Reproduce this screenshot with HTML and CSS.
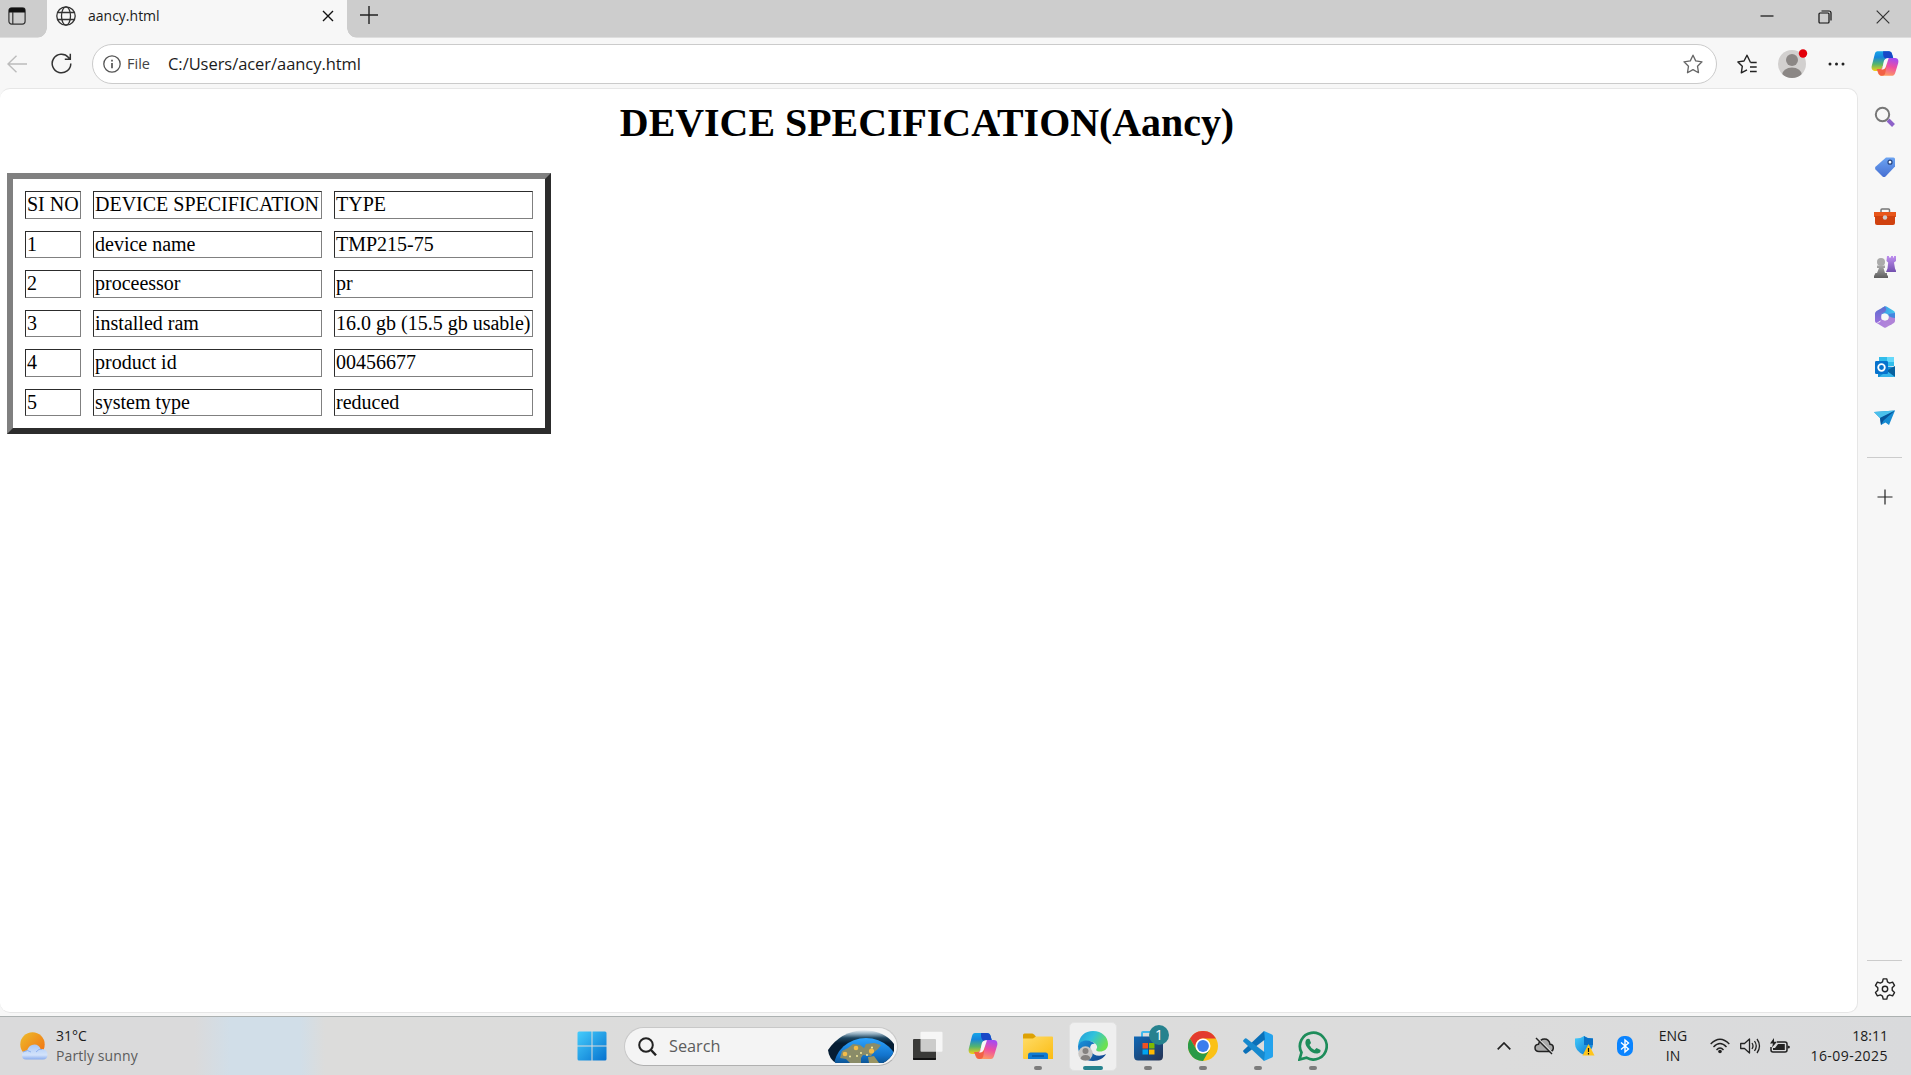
FILE: index.html
```html
<!DOCTYPE html>
<html lang="en">
<head>
<meta charset="utf-8">
<title>aancy.html</title>
<link rel="stylesheet" href="styles.css">
</head>
<body>
<svg class="defs" width="0" height="0" aria-hidden="true">
  <defs>
    <linearGradient id="cpA" x1="0" y1="0" x2="0" y2="1"><stop offset="0" stop-color="#16a5e8"/><stop offset=".3" stop-color="#1686dc"/><stop offset=".65" stop-color="#55b56c"/><stop offset="1" stop-color="#f5cf13"/></linearGradient>
    <linearGradient id="cpB" x1=".6" y1="0" x2=".3" y2="1"><stop offset="0" stop-color="#a64bf0"/><stop offset=".45" stop-color="#ee4fa0"/><stop offset="1" stop-color="#ffa25c"/></linearGradient>
    <linearGradient id="blue" x1="0" y1="0" x2="1" y2="1"><stop offset="0" stop-color="#45cdfc"/><stop offset="1" stop-color="#0672cf"/></linearGradient>
    <linearGradient id="tagG" x1="0" y1="0" x2="0" y2="1"><stop offset="0" stop-color="#6ca4f2"/><stop offset="1" stop-color="#466fd2"/></linearGradient>
    <linearGradient id="purple" x1="0" y1="0" x2="0" y2="1"><stop offset="0" stop-color="#bf8ff0"/><stop offset="1" stop-color="#7350ae"/></linearGradient>
    <linearGradient id="grey" x1="0" y1="0" x2="0" y2="1"><stop offset="0" stop-color="#aaa"/><stop offset="1" stop-color="#5e5e5e"/></linearGradient>
    <linearGradient id="hexTop" x1="0" y1="0" x2="1" y2="0"><stop offset="0" stop-color="#3a9be6"/><stop offset="1" stop-color="#45c8ee"/></linearGradient>
    <linearGradient id="hexLeft" x1="0" y1="0" x2="0" y2="1"><stop offset="0" stop-color="#5a6fd0"/><stop offset="1" stop-color="#9a6fdc"/></linearGradient>
    <linearGradient id="hexBottom" x1="0" y1="0" x2="1" y2="0"><stop offset="0" stop-color="#a97be0"/><stop offset="1" stop-color="#b58ad6"/></linearGradient>
    <linearGradient id="sun" x1="0" y1="0" x2="1" y2="1"><stop offset="0" stop-color="#edbd2c"/><stop offset="1" stop-color="#f26b10"/></linearGradient>
    <linearGradient id="cloud" x1="0" y1="0" x2="0" y2="1"><stop offset="0" stop-color="#a9c7f5"/><stop offset=".7" stop-color="#d3e3fb"/><stop offset="1" stop-color="#89acee"/></linearGradient>
    <linearGradient id="folder" x1="0" y1="0" x2="1" y2="1"><stop offset="0" stop-color="#ffdc67"/><stop offset="1" stop-color="#fbbc13"/></linearGradient>
    <linearGradient id="edgeT" x1="0" y1="0" x2="1" y2=".5"><stop offset="0" stop-color="#229bd8"/><stop offset=".5" stop-color="#31c2dc"/><stop offset="1" stop-color="#6be052"/></linearGradient>
    <linearGradient id="edgeB" x1="0" y1="0" x2="1" y2="1"><stop offset="0" stop-color="#1a93dd"/><stop offset="1" stop-color="#123f86"/></linearGradient>
    <linearGradient id="store" x1="0" y1="0" x2="1" y2="1"><stop offset="0" stop-color="#0e68b7"/><stop offset="1" stop-color="#263252"/></linearGradient>
    <linearGradient id="sky" x1="0" y1="0" x2="0" y2="1"><stop offset="0" stop-color="#f0f3f5"/><stop offset=".12" stop-color="#8fabbd"/><stop offset=".24" stop-color="#1d4560"/><stop offset=".4" stop-color="#061d33"/></linearGradient>
    <linearGradient id="globeRim" x1="0" y1="0" x2="0" y2="1"><stop offset="0" stop-color="#2da4ff"/><stop offset=".3" stop-color="#1273cc"/><stop offset=".6" stop-color="#07304f"/></linearGradient>
    <symbol id="copilot" viewBox="0 0 30 28">
      <path d="M7 1H19c2 0 3 1 3.600 3L24 9H18c-2 0-3 1-3.700 3l-2.500 7c-.6 2-2 3-4 3H4C1 22 0 19 1 16L4 4c.6-2 1.500-3 3-3z" fill="url(#cpA)"/>
      <path d="M13 1h6c2 0 3 1 3.600 3L24 9h-7c-2 0-4-2-4-5z" fill="#1747c7"/>
      <path d="M23 27H11c-2 0-3-1-3.600-3L6.500 20H9c2 0 3-1 3.700-3l2.500-6c.7-2 2-3 4-3H26c3 0 4 3 3 6l-3 10c-.6 2-1.500 3-3 3z" fill="url(#cpB)"/>
      <path d="M6 20h6c2 0 3-1 3.500-3l2-6-2 12c-.5 3-1.500 4-4 4-2 0-3-1-3.600-3z" fill="#f26145"/>
      <path d="M13.500 12.500c.8-3 2-4.300 5.500-4.300l-3.200 9.500c-.8 2-2 2.800-5 2.800 1-.6 1.300-1.300 1.700-2.500z" fill="#f7f7f7"/>
    </symbol>
  </defs>
</svg>

<header class="tabstrip">
  <svg class="tab-actions" viewBox="0 0 18 18"><rect x=".9" y=".9" width="16.200" height="16.200" rx="2.800" fill="none" stroke="#333" stroke-width="1.200"/><path d="M1 5.500V3Q1 1 3 1H15Q17 1 17 3V5.500Z" fill="#111"/><path d="M4.800 5V17" stroke="#333" stroke-width="1.200"/></svg>
  <div class="tab">
    <svg class="globe" viewBox="0 0 20 20" fill="none" stroke="#333" stroke-width="1.300"><circle cx="10" cy="10" r="9.200"/><ellipse cx="10" cy="10" rx="4.500" ry="9.200"/><path d="M1.600 6.500H18.400M1.600 13.500H18.400"/></svg>
    <span class="tab-title">aancy.html</span>
    <svg class="tab-close" viewBox="0 0 12 12" stroke="#111" stroke-width="1.400"><path d="M1 1L11 11M11 1L1 11"/></svg>
  </div>
  <svg class="new-tab" viewBox="0 0 18 18" stroke="#222" stroke-width="1.400"><path d="M9 0V18M0 9H18"/></svg>
  <div class="window-controls">
    <svg viewBox="0 0 14 14"><path d="M.5 6H13.500" stroke="#111" stroke-width="1.200"/></svg>
    <svg viewBox="0 0 14 14" fill="none" stroke="#111" stroke-width="1.200"><rect x="1" y="3" width="10" height="10" rx="1"/><path d="M3.500 1H11Q13 1 13 3V10.500"/></svg>
    <svg viewBox="0 0 14 14" stroke="#333" stroke-width="1.200"><path d="M.7 .7L13.300 13.300M13.300 .7L.7 13.300"/></svg>
  </div>
</header>

<div class="toolbar">
  <svg class="back" viewBox="0 0 20 18" fill="none" stroke="#bcbcbc" stroke-width="1.400"><path d="M9.500 .8L1 9L9.500 17.200M1 9H20"/></svg>
  <svg class="reload" viewBox="0 0 21 21" fill="none" stroke="#333" stroke-width="1.500"><path d="M19.800 10.500A9.300 9.300 0 1 1 17.500 4.400L19 6.100M19.300 .8V6.200H13.800"/></svg>
  <div class="address">
    <svg class="info" viewBox="0 0 18 18" fill="none" stroke="#555" stroke-width="1.300"><circle cx="9" cy="9" r="8.200"/><path d="M9 8V13.200M9 4.800V6.400" stroke-width="1.700"/></svg>
    <span class="scheme">File</span>
    <span class="url">C:/Users/acer/aancy.html</span>
    <svg class="star" viewBox="0 0 20 20" fill="none" stroke="#666" stroke-width="1.300" stroke-linejoin="round"><path d="M10 1.200L12.700 6.900L19 7.800L14.500 12.200L15.500 18.700L10 15.600L4.500 18.700L5.500 12.200L1 7.800L7.300 6.900Z"/></svg>
  </div>
  <svg class="favorites" viewBox="0 0 20 20" fill="none" stroke="#222" stroke-width="1.400" stroke-linejoin="round"><path d="M13.500 8.500L10 1.200L7 7L.9 7.900L5.300 12.300L4.300 18.800L10 15.800M13 13H19.700M13 17.500H19.700M13.500 8.500H19.700"/></svg>
  <svg class="avatar" viewBox="0 0 30 29"><defs><clipPath id="av"><circle cx="14" cy="15" r="14"/></clipPath></defs><g clip-path="url(#av)"><rect width="30" height="30" fill="#d2d0cf"/><circle cx="14" cy="11" r="6" fill="#8b8785"/><ellipse cx="14" cy="26" rx="10" ry="7.500" fill="#8b8785"/></g><circle cx="25" cy="4.500" r="4.200" fill="#e3000b"/></svg>
  <svg class="more" viewBox="0 0 17 4" fill="#222"><circle cx="2" cy="2" r="1.500"/><circle cx="8.500" cy="2" r="1.500"/><circle cx="15" cy="2" r="1.500"/></svg>
  <svg class="copilot-btn"><use href="#copilot"/></svg>
</div>

<div class="workspace">
  <main class="page">
    <h1>DEVICE SPECIFICATION(Aancy)</h1>
    <table>
      <tr><td>SI NO</td><td>DEVICE SPECIFICATION</td><td>TYPE</td></tr>
      <tr><td>1</td><td>device name</td><td>TMP215-75</td></tr>
      <tr><td>2</td><td>proceessor</td><td>pr</td></tr>
      <tr><td>3</td><td>installed ram</td><td>16.0 gb (15.5 gb usable)</td></tr>
      <tr><td>4</td><td>product id</td><td>00456677</td></tr>
      <tr><td>5</td><td>system type</td><td>reduced</td></tr>
    </table>
  </main>
  <aside class="sidebar">
    <svg viewBox="0 0 22 22"><path d="M14 14L19.500 19.500" stroke="#8d62c9" stroke-width="4"/><circle cx="8.500" cy="8.500" r="6.700" fill="#f7f7f7" stroke="#777" stroke-width="2"/></svg>
    <svg viewBox="0 0 22 22"><path d="M12 1.500H19.500Q21 1.500 21 3V10.500L11.500 20.500Q10 21.700 8.500 20.500L1.500 13.500Q.5 12 1.500 10.800Z" fill="url(#tagG)"/><circle cx="16" cy="6.200" r="2" fill="#fff" stroke="#27447f" stroke-width="1.200"/></svg>
    <svg viewBox="0 0 22 22"><path d="M7 7V4Q7 3 8 3H14.500Q15.500 3 15.500 4V7" fill="none" stroke="#777" stroke-width="1.500"/><path d="M0 6H22V11H0Z" fill="#e8561a"/><path d="M1 10H21V17Q21 19 19 19H3Q1 19 1 17Z" fill="#d0420f"/><circle cx="11" cy="11.500" r="2.200" fill="#ccc"/></svg>
    <svg viewBox="0 0 22 22"><path d="M13 0h2v1.500h2V0h2v1.500h1V0h2v5l-2 1.500 1 6 1.500 3.500H12l1.500-3.500.7-6L12.500 5z" fill="url(#purple)"/><circle cx="7" cy="6" r="4" fill="#aaa"/><path d="M3 9.500H11V12H9.500L11 17H13V19L14 20V22H0V20L1.500 17H3L5 12H3Z" fill="url(#grey)"/></svg>
    <svg viewBox="0 0 22 22"><path d="M11 .3L8 2V8L11 7.500L14.500 9.500L21 12V7Q21 5.500 19.500 4.700L12.500 .5Q11.700 0 11 .3Z" fill="url(#hexTop)"/><path d="M11 .3L2.500 5Q1 6 1 7.500V15Q1 16.500 2.500 17L7.500 14V9Q7.500 7.500 9 7L11.500 5.500Q13 3 11 .3Z" fill="url(#hexLeft)"/><path d="M1.500 16.300L10 21.400Q11 22 12 21.400L18 18L14.500 13.500L11 14.500L7.500 13L6 16Q4 17.500 1.500 16.300Z" fill="url(#hexBottom)"/><path d="M21 7.500V15Q21 16.500 19.500 17.300L16 19.300L10 15.500L13 14Q14.500 13 14.500 11.500V8Z" fill="#b083d8"/><path d="M14.500 8L21 7V12Q18 12 14.500 10Z" fill="#4287df"/><circle cx="11" cy="11" r="3.600" fill="#f7f7f7"/></svg>
    <svg viewBox="0 0 22 22"><path d="M5 1H20V10H5Z" fill="#31bdeb"/><path d="M13 1H20V6H13Z" fill="#65d9fb"/><path d="M4 10L21 11V20Q21 21 20 21H4Z" fill="#138ed5"/><path d="M21 10V21L12 15Z" fill="#08619f"/><path d="M21 21H5L13 15Z" fill="#36b5ea"/><rect x="1" y="5" width="13" height="13" rx="1.200" fill="#0773cd"/><circle cx="7.500" cy="11.500" r="3.300" fill="none" stroke="#fff" stroke-width="1.800"/></svg>
    <svg viewBox="0 0 22 22"><path d="M0 5L21 3.500L15 18L11.500 15.500L7 18L6 11Z" fill="#168bd2"/><path d="M0 5L21 3.500L6 11Z" fill="#4bc0ec"/><path d="M6 11L21 3.500L9.500 13.500L7 18Z" fill="#07549a"/></svg>
    <hr>
    <svg class="add" viewBox="0 0 22 22" stroke="#222" stroke-width="1.200"><path d="M11 3.500V18.500M3.500 11H18.500"/></svg>
    <hr class="lower">
    <svg class="gear" viewBox="0 0 22 22" fill="none" stroke="#222" stroke-width="1.400" stroke-linejoin="round"><path d="M9.200 .9H12.800L13.500 3.900L15.600 5.100L18.600 4.200L20.500 7.400L18.200 9.700V12.300L20.500 14.600L18.600 17.800L15.600 16.900L13.500 18.100L12.800 21.100H9.200L8.500 18.100L6.400 16.900L3.400 17.800L1.500 14.600L3.800 12.300V9.700L1.500 7.400L3.400 4.200L6.400 5.100L8.500 3.900Z"/><circle cx="11" cy="11" r="2.700"/></svg>
  </aside>
</div>

<footer class="taskbar">
  <div class="weather">
    <svg viewBox="0 0 28 28"><circle cx="12.500" cy="12.500" r="12.200" fill="url(#sun)"/><path d="M6 27.500Q2 27.500 2 23Q2 19 7 18.500Q9 12.500 14.500 12.500Q19 12.500 20.500 17Q27.500 17 27.500 22.500Q27.500 27.500 23 27.500Z" fill="url(#cloud)"/><path d="M3 20Q8 17 11 20M16 20Q19 16 22 17.500" fill="none" stroke="#8eb2f1"/></svg>
    <div class="weather-text"><span>31°C</span><span class="muted">Partly sunny</span></div>
  </div>
  <div class="apps">
    <div class="app"><svg viewBox="0 0 30 30"><path d="M.5 2Q.5 .5 2 .5H14.500V14.500H.5ZM15.500 .5H28Q29.500 .5 29.500 2V14.500H15.500ZM.5 15.500H14.500V29.500H2Q.5 29.500 .5 28ZM15.500 15.500H29.500V28Q29.500 29.500 28 29.500H15.500Z" fill="url(#blue)"/></svg></div>
    <div class="search">
      <svg class="lens" viewBox="0 0 19 19" fill="none" stroke="#222" stroke-width="2"><circle cx="8" cy="8" r="6.800"/><path d="M13 13L18 18.300" stroke-width="2.400"/></svg>
      <span>Search</span>
      <svg class="earth" viewBox="0 0 66 33"><defs><clipPath id="disc"><path d="M0 20Q13 1 36 0Q57 1 66 14V21Q63 29 55 33H8Q1 29 0 20Z"/></clipPath></defs><g clip-path="url(#disc)"><rect width="66" height="33" fill="url(#sky)"/><ellipse cx="38" cy="37" rx="32" ry="29" fill="url(#globeRim)"/><path d="M12 28L14 21L20 18L25 14L32 15L36 18L38 14L46 13L53 15L50 19L45 23L43 26L35 25L33 28V33H22L18 29Z" fill="#8a8c68"/><path d="M40 27L46 26L51 33H41Z" fill="#9b9562"/><g fill="#f5bc48"><circle cx="17" cy="24" r="2.300"/><circle cx="28" cy="18" r="2.300"/><circle cx="43.500" cy="21" r="2.600"/></g><g fill="#fff2a0"><circle cx="22" cy="26.500" r=".9"/><circle cx="29" cy="26" r=".9"/><circle cx="33" cy="23" r=".9"/><circle cx="39" cy="25" r=".9"/><circle cx="44" cy="17.500" r="1"/></g></g></svg>
    </div>
    <div class="app"><svg viewBox="0 0 30 30"><rect y="8" width="23" height="21" rx="1" fill="#3a3a38"/><path d="M0 27H23V28Q23 29 22 29H1Q0 29 0 28Z" fill="#111"/><rect x="7.500" y=".8" width="22" height="20" rx="1" fill="#fff" opacity=".74"/></svg></div>
    <div class="app"><svg viewBox="0 0 30 28"><use href="#copilot"/></svg></div>
    <div class="app open"><svg viewBox="0 0 30 30"><path d="M0 7V4Q0 2.500 1.500 2.500H9Q10 2.500 11 3.500L13 5.500V9H0Z" fill="#dda104"/><path d="M0 7.500H10L13 5.500H29Q30 5.500 30 6.500V28H1Q0 28 0 27Z" fill="url(#folder)"/><path d="M5 28V24Q5 21.500 7.500 21.500H22.500Q25 21.500 25 24V28Z" fill="#117bd3"/><path d="M9 25H21" stroke="#08559f" stroke-width="1.500"/></svg></div>
    <div class="app open active"><svg viewBox="0 0 30 30"><path d="M0 15C1 5 7 0 15 0C24 0 30 6 30 13C30 18 26 20.500 22 20.500C18 20.500 17.500 19 19 17C20 14 16 10 10 10C5 10 1 12 0 15Z" fill="url(#edgeT)"/><path d="M0 15C2 8 13 8 17 13C13 12 11 16 13 20C15 25 22 26 28 23C26 27 21 30 15 30C6 30 0 24 0 15Z" fill="url(#edgeB)"/><circle cx="7.500" cy="22.500" r="7.200" fill="#c9c7c5"/><circle cx="7.500" cy="20" r="3" fill="#858280"/><path d="M2.500 28Q3 24 7.500 24Q12 24 12.500 28Q7.500 31 2.500 28" fill="#858280"/></svg></div>
    <div class="app open"><svg viewBox="0 0 30 30"><path d="M9 7V2Q9 1 10 1H20Q21 1 21 2V7" fill="none" stroke="#42b9ed" stroke-width="2"/><path d="M1 5.500H30V25Q30 29.500 26 29.500H5Q1 29.500 1 25Z" fill="url(#store)"/><path d="M9.500 12H15V17.500H9.500Z" fill="#f25022"/><path d="M16 12H21.500V17.500H16Z" fill="#7fba00"/><path d="M9.500 18.500H15V23.500H9.500Z" fill="#00a4ef"/><path d="M16 18.500H21.500V23.500H16Z" fill="#ffb900"/></svg><b class="badge">1</b></div>
    <div class="app open"><svg viewBox="0 0 30 30"><circle cx="15" cy="15" r="15" fill="#fbc116"/><path d="M2 7.500A15 15 0 0 1 28 7.500H15A7.500 7.500 0 0 0 8.500 18.800Z" fill="#e33b2e"/><path d="M2 7.500L8.500 18.800A7.500 7.500 0 0 0 18 21.900L21.500 18.800L15 30A15 15 0 0 1 2 7.500Z" fill="#2a9a48"/><circle cx="15" cy="15" r="7.500" fill="#fff"/><circle cx="15" cy="15" r="5.900" fill="#3b7ded"/></svg></div>
    <div class="app open"><svg viewBox="0 0 30 30"><path d="M21 0L29 3.500Q30 4 30 5V25Q30 26 29 26.500L21 30Z" fill="#24a3ed"/><path d="M21 0L22 8.500L3.500 22.500Q2.500 23 2 22.500L.5 21Q-.3 20 .5 19.200Z" fill="#0b70b8"/><path d="M21 30L22 21.500L3.500 7.500Q2.500 7 2 7.500L.5 9Q-.3 10 .5 10.800Z" fill="#1689ce"/></svg></div>
    <div class="app open"><svg viewBox="0 0 30 30"><path d="M1.500 28.500L3.500 21.500A13.400 13.400 0 1 1 8.500 26.700Z" fill="none" stroke="#1d8c5a" stroke-width="2.700"/><path d="M8 9Q9.500 7 11.500 8L13 12L11.500 14Q13 17.500 16.500 19L18.500 17L22.500 19Q23 22 19.500 22.500Q14 23 10 17.500Q6 13 8 9Z" fill="#1d8c5a"/></svg></div>
  </div>
  <div class="tray">
    <svg class="chevron" viewBox="0 0 14 8" fill="none" stroke="#222" stroke-width="1.700"><path d="M.7 7.300L7 1L13.300 7.300"/></svg>
    <svg class="cloud" viewBox="0 0 20 18"><path d="M5 14.500Q1 14.500 1 10.800Q1 7.500 4.500 7.200Q6 2 10.500 2Q15 2 16 7.200Q19.300 7.500 19.300 10.800Q19.300 14.500 15.500 14.500Z" fill="#aaa" stroke="#222" stroke-width="1.500"/><path d="M3.500 1L18.500 16" stroke="#dcdcdc" stroke-width="1.500"/><path d="M2 1L18 17" stroke="#222" stroke-width="1.500"/></svg>
    <svg class="shield" viewBox="0 0 20 20"><path d="M9 0Q12 2.500 18 2.500V8Q18 15 9 19Q0 15 0 8V2.500Q6 2.500 9 0Z" fill="url(#blue)"/><path d="M9 0Q12 2.500 18 2.500V9H9Z" fill="#0a70c6"/><path d="M13.500 8L19.500 19.500H7.500Z" fill="#ffc51b"/><path d="M13.500 12V16M13.500 17V18.500" stroke="#111" stroke-width="1.200"/></svg>
    <svg class="bluetooth" viewBox="0 0 16 20"><rect width="16" height="20" rx="7" fill="#0a84ff"/><path d="M4 6.500L11.500 13L8 16V4L11.500 7L4 13.500" fill="none" stroke="#fff" stroke-width="1.400"/></svg>
    <div class="lang"><span>ENG</span><span>IN</span></div>
    <svg class="wifi" viewBox="0 0 20 16" fill="none" stroke="#222" stroke-width="1.400"><path d="M.7 6Q10-3.500 19.300 6M3.500 9Q10 2 16.500 9M6.500 12Q10 8 13.500 12"/><circle cx="10" cy="13.500" r="1.800" fill="#222" stroke="none"/></svg>
    <svg class="volume" viewBox="0 0 21 16" fill="none" stroke="#222" stroke-width="1.300" stroke-linejoin="round"><path d="M.7 5.500H4.500L9.500 1V15L4.500 10.500H.7ZM12 5Q14 8 12 11M14.500 3Q18 8 14.500 13M17 1Q22 8 17 15"/></svg>
    <svg class="battery" viewBox="0 0 20 16"><path d="M7 4H15Q17 4 17 6V12Q17 14 15 14H3Q1 14 1 12V9" fill="none" stroke="#222" stroke-width="1.500"/><path d="M8 6H14.800V12H3V10H5ZM17.500 7.500Q20 7.500 20 9Q20 10.500 17.500 10.500ZM4 0L0 5.500H3L2 9.500L7 3.800H4Z" fill="#222"/></svg>
    <div class="clock"><span>18:11</span><span class="date">16-09-2025</span></div>
  </div>
</footer>
</body>
</html>
```
FILE: styles.css
```css
* { box-sizing: border-box; }
body {
  margin: 0;
  height: 1075px;
  display: flex;
  flex-direction: column;
  overflow: hidden;
  background: #f7f7f7;
  color: #1b1b1b;
  font-family: "Open Sans", "Noto Sans", sans-serif;
}
svg { display: block; flex: none; }
.defs { position: absolute; }

/* Tab strip */
.tabstrip {
  height: 38px;
  flex: none;
  display: flex;
  background: linear-gradient(#cdcdcd 37px, #dedede 37px);
}
.tab-actions { width: 18px; height: 18px; margin: 7px 21px 0 8px; }
.tab {
  position: relative;
  width: 300px;
  height: 39px;
  padding: 0 13px 7px 9px;
  display: flex;
  align-items: center;
  background: #f7f7f7;
}
.tab::before, .tab::after {
  content: "";
  position: absolute;
  bottom: 1px;
  width: 10px;
  height: 10px;
}
.tab::before { left: -10px; background: radial-gradient(circle at 0 0, transparent 9.500px, #f7f7f7 10px); }
.tab::after { right: -10px; background: radial-gradient(circle at 100% 0, transparent 9.500px, #f7f7f7 10px); }
.globe { width: 20px; height: 20px; }
.tab-title { margin-left: 12px; font-size: 14px; line-height: 20px; }
.tab-close { width: 12px; height: 12px; margin-left: auto; }
.new-tab { width: 18px; height: 18px; margin: 6px 0 0 13px; }
.window-controls { margin: 10px 21px 0 auto; display: flex; gap: 44px; }
.window-controls svg { width: 14px; height: 14px; }

/* Toolbar */
.toolbar { height: 50px; flex: none; display: flex; align-items: center; padding: 1px 12px 0 7px; }
.back { width: 20px; height: 18px; }
.reload { width: 21px; height: 21px; margin-left: 24px; }
.address {
  width: 1625px;
  height: 40px;
  margin-left: 20px;
  padding: 0 13px 0 10px;
  display: flex;
  align-items: center;
  border: 1px solid #cbcbcb;
  border-radius: 20px;
  background: #fff;
}
.info { width: 18px; height: 18px; }
.scheme { width: 41px; margin-left: 6px; font-size: 14.500px; color: #444; }
.url { font-size: 16.500px; letter-spacing: -.05px; }
.star { width: 20px; height: 20px; margin-left: auto; }
.favorites { width: 20px; height: 20px; margin-left: 20px; }
.avatar { width: 30px; height: 29px; margin: -1px 0 0 21px; }
.more { width: 17px; height: 4px; margin-left: 20px; }
.copilot-btn { width: 28px; height: 27px; margin-left: auto; }

/* Page and sidebar */
.workspace { height: 928px; flex: none; display: flex; padding-bottom: 3px; }
.page {
  width: 1858px;
  padding: 11px 10px 0 7px;
  background: #fff;
  border: solid #e6e6e6;
  border-width: 1px 1px 1px 0;
  border-radius: 10px;
  color: #000;
  font-family: "Liberation Serif", "Times New Roman", serif;
}
h1 { margin: 0; font-size: 39.900px; line-height: 46px; font-weight: bold; text-align: center; }
table {
  margin-top: 27px;
  width: 544px;
  table-layout: fixed;
  border: 6px solid;
  border-color: #808080 #2c2c2c #2c2c2c #808080;
  border-spacing: 12px;
  font-size: 20px;
  line-height: 23px;
}
td {
  height: 27.550px;
  padding: 0 1px;
  white-space: nowrap;
  border: 1px solid;
  border-color: #2c2c2c #808080 #808080 #2c2c2c;
}
td:nth-child(1) { width: 56px; }
td:nth-child(2) { width: 229px; }
td:nth-child(3) { width: 199px; }
.sidebar { flex: 1; display: flex; flex-direction: column; align-items: center; padding-top: 18px; }
.sidebar svg { width: 22px; height: 22px; margin-bottom: 28.100px; }
.sidebar hr { width: 35px; height: 1px; margin: 0; border: 0; background: #ccc; }
.sidebar .add { margin: 28px 0 0; }
.sidebar .lower { margin-top: auto; }
.sidebar .gear { margin: 17px 0 13px; }

/* Taskbar */
.taskbar {
  height: 59px;
  flex: none;
  display: flex;
  align-items: center;
  border-top: 1px solid #acb1b1;
  background: linear-gradient(90deg, #dadadb 0 195px, #d1dee8 230px 300px, #dcdcdb 325px, #dcdcdc 1500px, #d9dadc);
}
.weather { width: 564px; padding-left: 20px; display: flex; gap: 8px; align-items: center; }
.weather svg { width: 28px; height: 28px; }
.weather-text, .lang, .clock { display: flex; flex-direction: column; font-size: 14px; line-height: 20px; }
.muted { color: #5c5c5c; letter-spacing: .1px; }
.apps { display: flex; align-items: center; }
.app { position: relative; width: 55px; height: 49px; display: grid; place-items: center; }
.app > svg { width: 30px; height: 30px; }
.app.open::after {
  content: "";
  position: absolute;
  left: 24px;
  bottom: 1px;
  width: 8px;
  height: 4px;
  border-radius: 2px;
  background: #7c7c7c;
}
.app.active::before {
  content: "";
  position: absolute;
  inset: 0 3px 0 4px;
  border: 1px solid #e2e2e2;
  border-radius: 5px;
  background: #efefef;
}
.app.active > svg { position: relative; }
.app.open.active::after { left: 18px; width: 20px; background: #26828e; }
.badge {
  position: absolute;
  left: 29px;
  top: 3px;
  width: 20px;
  height: 20px;
  border-radius: 50%;
  background: #26828e;
  color: #fff;
  font-size: 14px;
  font-weight: 400;
  line-height: 20px;
  text-align: center;
}
.search {
  width: 274px;
  height: 39px;
  margin: 0 2px 0 5px;
  padding: 0 3px 0 13px;
  display: flex;
  align-items: center;
  border: 1px solid #c8c8c8;
  border-bottom-color: #b0b0b0;
  border-radius: 20px;
  background: #f4f4f4;
  color: #5c5c5c;
  font-size: 16.300px;
}
.lens { width: 19px; height: 19px; margin-right: 12px; }
.earth { width: 66px; height: 33px; margin-left: auto; }
.tray { margin-left: auto; padding-right: 23px; display: flex; align-items: center; }
.chevron { width: 14px; height: 8px; margin-right: 23px; }
.cloud { width: 20px; height: 18px; margin-right: 21px; }
.shield { width: 20px; height: 20px; margin-right: 22px; }
.bluetooth { width: 16px; height: 20px; margin-right: 20px; }
.lang { width: 40px; align-items: center; margin-right: 17px; }
.wifi { width: 20px; height: 16px; margin-right: 10px; }
.volume { width: 21px; height: 16px; margin-right: 9px; }
.battery { width: 20px; height: 16px; }
.clock { width: 98px; align-items: flex-end; }
.date { letter-spacing: .45px; }
```
